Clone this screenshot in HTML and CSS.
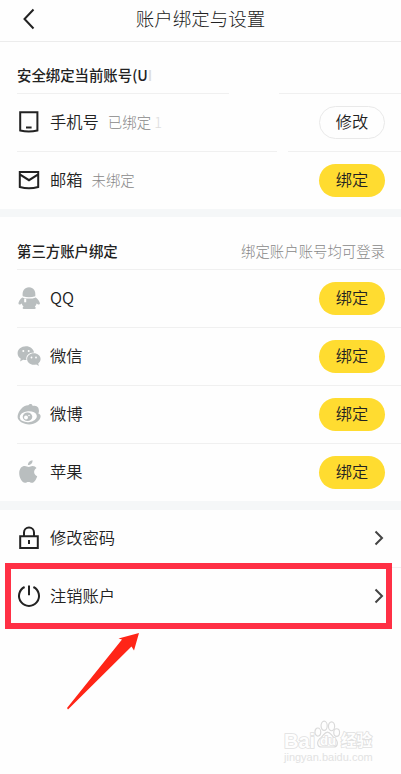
FILE: index.html
```html
<!DOCTYPE html>
<html lang="zh-CN">
<head>
    <meta charset="UTF-8">
    <meta name="viewport" content="width=device-width, initial-scale=1.0">
    <title>账户绑定与设置</title>
    <link rel="stylesheet" href="styles.css">
</head>
<body>
    <header class="top-bar">
        <svg class="back-icon" viewBox="0 0 14 22"><path d="M11.5 1.5 2.5 11l9 9.5"/></svg>
        <h1>账户绑定与设置</h1>
    </header>

    <section class="group">
        <div class="group-title line-gap-wide">
            <h2>安全绑定当前账号(U<span class="faded">I</span></h2>
        </div>
        <div class="row line-gap">
            <svg class="icon" viewBox="0 0 24 24"><path d="M3.2 2.2h17.2v18.3q-8.6 2-17.2 0zM9 17.4h5.6"/></svg>
            <span class="label">手机号</span>
            <span class="status">已绑定 <span class="faded">1</span></span>
            <button class="btn btn-edit">修改</button>
        </div>
        <div class="row last">
            <svg class="icon" viewBox="0 0 24 24"><path d="M2.8 4h18.4v15q-9.2 2.4-18.4 0zM2.8 6.3 12 12.2l9.2-5.9"/></svg>
            <span class="label">邮箱</span>
            <span class="status">未绑定</span>
            <button class="btn">绑定</button>
        </div>
    </section>

    <section class="group">
        <div class="group-title third-party">
            <h2>第三方账户绑定</h2>
            <span class="hint">绑定账户账号均可登录</span>
        </div>
        <div class="row">
            <svg class="icon brand" viewBox="0 0 24 24">
                <path d="M5.7 10.3C5 4.8 7.5 1.2 12 1.2s7 3.6 6.3 9.1q-6.3 2-12.6 0z"/>
                <path d="M5.2 11.4q3 1.2 6.8 1.2t6.8-1.2c2.4 2 4.4 4.6 4.1 6.7-.5 1-2.6.2-3.300-.5-.3 1.400-.9 2.300-1.800 3.100 1.200.5 1.500 2.300-.4 2.300H7c-1.900 0-1.600-1.800-.4-2.300-.9-.8-1.500-1.700-1.800-3.100-.7.700-2.800 1.500-3.300.5-.3-2.100 1.300-4.700 3.700-6.700z"/>
                <path class="cut" d="M7.200 12.500v3.800h2v-3.300z"/>
            </svg>
            <span class="label">QQ</span>
            <button class="btn">绑定</button>
        </div>
        <div class="row">
            <svg class="icon brand" viewBox="0 0 24 24">
                <path d="M9 2.200C4.300 2.200.6 5.200.6 9.200c0 2.300 1.200 4.200 3.200 5.500L3 17.400l3.200-1.700q1.500.5 3.300.4c-1.100-4.200 2.300-7.600 7.600-7.600C16.500 4.700 13.100 2.200 9 2.200z"/>
                <path d="M16.800 9.300c-3.800 0-6.700 2.500-6.700 5.700s2.900 5.800 6.700 5.800q1.200 0 2.400-.4l2.700 1.500-.7-2.500c1.500-1.100 2.400-2.600 2.400-4.400 0-3.200-3-5.700-6.800-5.700z"/>
                <g class="cut"><circle cx="6.300" cy="7" r="1"/><circle cx="11.700" cy="7" r="1"/><circle cx="14.500" cy="13.500" r=".9"/><circle cx="19" cy="13.500" r=".9"/></g>
            </svg>
            <span class="label">微信</span>
            <button class="btn">绑定</button>
        </div>
        <div class="row">
            <svg class="icon brand" viewBox="0 0 24 24">
                <path d="M11.400 3.200c1.200-1.700 3.600-2 4.400.8 2-.8 4.600.1 5.300 1.600.7 1.300 1.500 4.500.2 5.900 1.700.8 2.400 1.600 2.300 3.100-.2 4.100-5.700 7.800-11.400 7.800S.6 19 .6 15C.6 9.700 6 3 11.400 3.200z"/>
                <ellipse class="cut" cx="11.300" cy="14.700" rx="8.600" ry="5.500" transform="rotate(-5 11.300 14.700)"/>
                <ellipse cx="10.500" cy="14.800" rx="4.800" ry="4.300"/>
                <circle class="cut" cx="9" cy="15.500" r="2"/>
                <circle class="cut" cx="12" cy="13.500" r=".8"/>
            </svg>
            <span class="label">微博</span>
            <button class="btn">绑定</button>
        </div>
        <div class="row last">
            <svg class="icon brand" viewBox="0 0 24 24">
                <path d="M15.500.2c.3 2.700-1.900 5-4.600 4.900C10.800 2.600 13 .5 15.500.2z"/>
                <path d="M15.500 6c1.700 0 3.100.7 4 2-3.500 2.200-3 6.700.7 8.200-.9 3-3 6.600-5.100 6.600-1.400 0-2-.8-3.600-.8-1.700 0-2.300.8-3.600.8-2.600 0-5.700-5-5.700-9.500C2.200 8.500 4.800 6 7.800 6c1.600 0 2.800 1 3.900 1s2.300-1 3.800-1z"/>
            </svg>
            <span class="label">苹果</span>
            <button class="btn">绑定</button>
        </div>
    </section>

    <section class="group">
        <div class="row">
            <svg class="icon" viewBox="0 0 24 24"><path d="M3.200 10.300h17.600v11.600H3.200zM7 10V6.500a5 5 0 0 1 10 0V10M12 14v4"/></svg>
            <span class="label">修改密码</span>
            <svg class="arrow" viewBox="0 0 10 16"><path d="m1.500 1.500 6.500 6.500-6.500 6.500"/></svg>
        </div>
        <div class="row last">
            <svg class="icon" viewBox="0 0 24 24"><path d="M7.600 3a10 10 0 1 0 8.800 0M12 1.500v9.700"/></svg>
            <span class="label">注销账户</span>
            <svg class="arrow" viewBox="0 0 10 16"><path d="m1.500 1.500 6.500 6.500-6.500 6.500"/></svg>
            <div class="highlight"></div>
            <svg class="pointer" viewBox="0 0 76 80"><path d="M1 77 56 8.500 52.500 7.500 73 2 68 19.500 65.500 15.500 2 78.500z"/></svg>
        </div>
    </section>

    <div class="watermark">
        <div class="wm-logo">
            <span class="wm-bai">Bai</span>
            <span class="wm-paw">
                <svg viewBox="0 0 28 30"><path d="M14 12.500c-3 0-4 3.500-6.500 5.500-5.500 4-4.500 10 .5 10h12c5 0 6-6 .5-10-2.500-2-3.500-5.500-6.500-5.500z"/><ellipse cx="4" cy="12.500" rx="3" ry="4.200"/><ellipse cx="10.500" cy="6" rx="3.200" ry="4.800"/><ellipse cx="18.200" cy="6.500" rx="3.200" ry="4.600"/><ellipse cx="23.500" cy="13" rx="3" ry="4"/></svg>
                <span class="wm-du">du</span>
            </span>
            <span class="wm-cn">经验</span>
        </div>
        <div class="wm-url">jingyan.baidu.com</div>
    </div>
</body>
</html>
```
FILE: styles.css
```css
* {
    box-sizing: border-box;
}
body {
    margin: 0;
    height: 774px;
    position: relative;
    overflow: hidden;
    font-family: "Noto Sans CJK SC", sans-serif;
    font-weight: 300;
    color: #222;
    background-color: #fefefe;
}
h1, h2 {
    margin: 0;
}
.top-bar {
    display: flex;
    align-items: center;
    height: 42px;
    padding: 0 22px 4px;
    border-bottom: 1px solid #ececec;
}
.top-bar h1 {
    flex: 1;
    margin-right: 14px;
    padding-bottom: 1px;
    text-align: center;
    font-size: 18.5px;
    font-weight: 300;
}
.back-icon {
    width: 14px;
    height: 22px;
    fill: none;
    stroke: #222;
    stroke-width: 2;
}
.group + .group {
    border-top: 8px solid #f5f7f8;
}
.group + .group:last-of-type {
    border-top-width: 9px;
}
.group-title, .row {
    --line: #f0f0f0;
    display: flex;
    align-items: center;
    margin-left: 17px;
    padding-right: 16px;
    background: linear-gradient(var(--line), var(--line)) bottom / 100% 1px no-repeat;
}
.group-title {
    justify-content: space-between;
    height: 52px;
    padding-top: 12px;
}
.group-title.third-party {
    height: 53px;
    padding-top: 13px;
}
.group-title h2 {
    font-size: 14.4px;
    font-weight: 500;
}
.hint, .status {
    font-size: 14.4px;
    color: #888;
}
.row {
    position: relative;
    height: 58px;
    padding-bottom: 2px;
}
.row.last {
    height: 57px;
    padding-bottom: 1px;
    background: none;
}
.line-gap-wide {
    background-image: linear-gradient(90deg, var(--line) 212px, transparent 212px 262px, var(--line) 262px);
}
.line-gap {
    background-image: linear-gradient(90deg, var(--line) 260px, transparent 260px 271px, var(--line) 271px);
}
.faded {
    color: #ddd;
}
.icon {
    width: 24px;
    height: 24px;
    margin-right: 9px;
    fill: none;
    stroke: #222;
    stroke-width: 2;
}
.brand {
    fill: #b9bebf;
    stroke: none;
}
.cut {
    fill: #fefefe;
}
.label, .status {
    padding-bottom: 2px;
}
.label {
    font-size: 16.3px;
    font-weight: 350;
}
.status {
    margin-left: 9px;
}
.btn {
    width: 66px;
    height: 33px;
    margin-left: auto;
    padding: 0 0 2px;
    border: none;
    border-radius: 17px;
    background-color: #ffdc30;
    color: #222;
    font: inherit;
    font-size: 16.2px;
    font-weight: 350;
}
.btn-edit {
    border: 1px solid #e9e9e9;
    background-color: #fefefe;
}
.arrow {
    width: 10px;
    height: 16px;
    margin-left: auto;
    margin-right: 1px;
    fill: none;
    stroke: #444;
    stroke-width: 2;
}
/* red frame and arrow drawn over the last row */
.highlight {
    position: absolute;
    top: -5px;
    left: -12px;
    width: 387px;
    height: 66px;
    border: 6px solid #ff3045;
}
.pointer {
    position: absolute;
    top: 63px;
    left: 49px;
    width: 76px;
    height: 80px;
    fill: #ff2517;
}
.watermark {
    position: absolute;
    left: 284px;
    top: 719px;
    width: 90px;
    font-family: "Liberation Sans", "Noto Sans CJK SC", sans-serif;
    font-weight: 700;
    color: #fefefe;
    -webkit-text-stroke: 1.6px #e0e0e0;
    paint-order: stroke fill;
}
.wm-logo {
    display: flex;
    align-items: flex-end;
    height: 31px;
    line-height: 18px;
}
.wm-bai {
    width: 30px;
    font-size: 20px;
}
.wm-paw {
    position: relative;
    width: 27px;
    height: 31px;
}
.wm-paw svg {
    width: 27px;
    height: 31px;
    fill: #fefefe;
    stroke: #dadada;
    stroke-width: 1.2;
    paint-order: normal;
}
.wm-du {
    position: absolute;
    left: 6px;
    bottom: 0;
    font-size: 13px;
}
.wm-cn {
    font-size: 15.5px;
}
.wm-url {
    font-size: 11px;
    font-weight: 400;
    line-height: 14px;
    -webkit-text-stroke: 0;
    color: #e2e2e2;
}
```
